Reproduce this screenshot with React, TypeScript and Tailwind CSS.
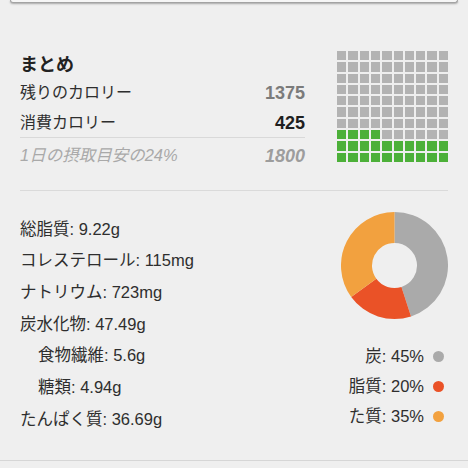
import React from "react";

const FONT = { fontFamily: '"Liberation Sans", "Noto Sans CJK JP", sans-serif' };

function arcPath(cx: number, cy: number, ro: number, ri: number, a0: number, a1: number) {
  const rad = (d: number) => (d * Math.PI) / 180;
  const pt = (r: number, a: number) => [cx + r * Math.sin(rad(a)), cy - r * Math.cos(rad(a))];
  const large = a1 - a0 > 180 ? 1 : 0;
  const [x0, y0] = pt(ro, a0);
  const [x1, y1] = pt(ro, a1);
  const [x2, y2] = pt(ri, a1);
  const [x3, y3] = pt(ri, a0);
  return `M${x0} ${y0} A${ro} ${ro} 0 ${large} 1 ${x1} ${y1} L${x2} ${y2} A${ri} ${ri} 0 ${large} 0 ${x3} ${y3} Z`;
}

function Donut() {
  const c = 53.5;
  const segs = [
    { a0: 0, a1: 162, color: "#aaaaaa" },
    { a0: 162, a1: 234, color: "#ea5227" },
    { a0: 234, a1: 360, color: "#f2a13f" },
  ];
  return (
    <svg width="107" height="107" viewBox="0 0 107 107">
      {segs.map((s, i) => (
        <path key={i} d={arcPath(c, c, 53.5, 22.5, s.a0, s.a1 === 360 ? 359.999 : s.a1)} fill={s.color} />
      ))}
    </svg>
  );
}

function Waffle() {
  const cells = Array.from({ length: 100 }, (_, i) => {
    const r = Math.floor(i / 10);
    const col = i % 10;
    return r >= 8 || (r === 7 && col < 4);
  });
  return (
    <div className="grid w-[111px] grid-cols-10 gap-[2px]">
      {cells.map((g, i) => (
        <div key={i} className={g ? "h-[9.3px] bg-[#4cb039]" : "h-[9.3px] bg-[#b3b3b3]"} />
      ))}
    </div>
  );
}

export default function App() {
  const nutrients: [string, boolean][] = [
    ["総脂質: 9.22g", false],
    ["コレステロール: 115mg", false],
    ["ナトリウム: 723mg", false],
    ["炭水化物: 47.49g", false],
    ["食物繊維: 5.6g", true],
    ["糖類: 4.94g", true],
    ["たんぱく質: 36.69g", false],
  ];
  const legend = [
    ["炭: 45%", "bg-[#aaaaaa]"],
    ["脂質: 20%", "bg-[#ea5227]"],
    ["た質: 35%", "bg-[#f2a13f]"],
  ];
  return (
    <div className="relative h-[468px] w-[468px] overflow-hidden bg-[#efefef] text-[#2e2e2e]" style={FONT}>
      <div className="mx-[10px] h-[3px] rounded-b-[5px] border-x border-b border-[#a3a3a3] bg-[#f6f6f6] shadow-[0_1px_2px_rgba(0,0,0,0.3)]" />

      <div className="mt-[48px] flex px-[20px]">
        <div className="w-[287px] pt-[1px]">
          <div className="flex h-[26px] items-center text-[18px] font-bold leading-none text-[#222]">まとめ</div>
          <div className="flex h-[30px] items-center justify-between text-[16px] leading-none">
            <span>残りのカロリー</span>
            <span className="text-[18px] font-bold text-[#7b7b7b]">1375</span>
          </div>
          <div className="flex h-[29px] items-center justify-between text-[16px] leading-none">
            <span>消費カロリー</span>
            <span className="text-[18px] font-bold text-[#1f1f1f]">425</span>
          </div>
          <div className="flex h-[36px] items-center justify-between border-t border-[#d9d9d9] text-[16.5px] italic leading-none text-[#a9a9a9]">
            <span>1日の摂取目安の24%</span>
            <span className="text-[18px] font-bold text-[#9d9d9d]">1800</span>
          </div>
        </div>
        <div className="ml-[32px]">
          <Waffle />
        </div>
      </div>

      <div className="mx-[20px] mt-[17px] h-px bg-[#dadada]" />

      <div className="mt-[21px] flex justify-between pl-[20px] pr-[20px]">
        <div className="flex flex-col pt-[1px]">
          {nutrients.map(([t, indent], i) => (
            <div key={i} className={`flex h-[31.7px] items-center text-[16.5px] leading-none ${indent ? "pl-[18px]" : ""}`}>
              {t}
            </div>
          ))}
        </div>
        <div className="flex w-[107px] flex-col items-end">
          <Donut />
          <div className="mt-[22px] flex flex-col items-end pr-[4px]">
            {legend.map(([t, c], i) => (
              <div key={i} className="flex h-[30px] items-center gap-[9px] text-[16.5px] leading-none">
                <span className="whitespace-nowrap">{t}</span>
                <span className={`h-[11px] w-[11px] rounded-full ${c}`} />
              </div>
            ))}
          </div>
        </div>
      </div>

      <div className="absolute left-0 right-0 top-[460px] h-px bg-[#d6d6d6]" />
    </div>
  );
}
